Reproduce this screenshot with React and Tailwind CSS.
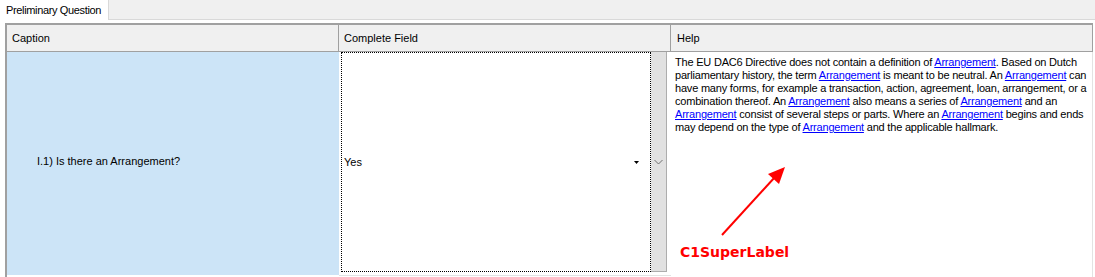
export default function App() {
  const A = ({ children = "Arrangement" }) => (
    <span className="text-[#0000ff] underline">{children}</span>
  );
  return (
    <div
      className="relative w-[1095px] h-[277px] overflow-hidden bg-white text-black text-[11px]"
      style={{ fontFamily: '"Liberation Sans", Arial, sans-serif' }}
    >
      {/* tab strip */}
      <div className="flex h-[20px]">
        <div className="w-[109px] h-[20px] bg-white border-r border-[#d9d9d9] flex items-center pl-[6px] leading-none whitespace-nowrap tracking-[-0.35px]">
          Preliminary Question
        </div>
        <div className="flex-1 h-[20px] bg-[#f0f0f0] border-b border-[#d9d9d9]" />
      </div>
      <div className="h-[3px]" />
      {/* grid */}
      <div className="ml-[5px] w-[1088px] h-[254px] border-l-2 border-t-2 border-[#a0a0a0] flex flex-col">
        <div className="flex h-[27px] bg-[#f0f0f0] border-b border-[#a0a0a0]">
          <div className="w-[332px] border-r border-[#a0a0a0] flex items-center pl-[5px]">Caption</div>
          <div className="w-[332px] border-r border-[#a0a0a0] flex items-center pl-[5px]">Complete Field</div>
          <div className="w-[422px] border-r border-[#a0a0a0] flex items-center pl-[6px]">Help</div>
        </div>
        <div className="flex flex-1">
          <div className="w-[332px] h-[223px] bg-[#cce4f7] flex items-center pl-[30px] pb-[5px]">
            I.1) Is there an Arrangement?
          </div>
          <div className="w-[332px] flex flex-col">
            <div className="flex h-[224px] border-b border-[#e3e3e3]">
              <div className="w-[2px]" />
              <div className="w-[310px] h-[220px] border border-dotted border-black flex items-center pl-[2px] pr-[11px]">
                <span className="flex-1">Yes</span>
                <svg width="5" height="3" viewBox="0 0 5 3" className="block">
                  <polygon points="0,0 5,0 2.5,3" fill="#000" />
                </svg>
              </div>
              <div className="w-[16px] h-[220px] bg-[#e1e1e1] border-r border-b border-[#adadad] flex items-center justify-center">
                <svg width="9" height="6" viewBox="0 0 9 6" className="block">
                  <polyline points="0.5,1 4.5,5 8.5,1" fill="none" stroke="#707070" strokeWidth="1" />
                </svg>
              </div>
            </div>
          </div>
          <div className="w-[422px] h-[225px] border-r border-[#e3e3e3] pl-[4px] pt-[4px] leading-[13px] whitespace-nowrap tracking-[-0.2px]">
            The EU DAC6 Directive does not contain a definition of <A />. Based on Dutch
            <br />
            parliamentary history, the term <A /> is meant to be neutral. An <A /> can
            <br />
            have many forms, for example a transaction, action, agreement, loan, arrangement, or a
            <br />
            combination thereof. An <A /> also means a series of <A /> and an
            <br />
            <A /> consist of several steps or parts. Where an <A /> begins and ends
            <br />
            may depend on the type of <A /> and the applicable hallmark.
          </div>
        </div>
      </div>
      {/* annotation */}
      <svg className="absolute left-0 top-0" width="1095" height="277" viewBox="0 0 1095 277">
        <line x1="722" y1="235" x2="775" y2="177" stroke="#ff0000" strokeWidth="2" />
        <polygon points="785,167 768,174 779,184" fill="#ff0000" />
      </svg>
      <div
        className="absolute left-[680px] top-[245px] text-[14px] font-bold text-[#ff0000] leading-none"
        style={{ fontFamily: '"DejaVu Sans", Verdana, sans-serif' }}
      >
        C1SuperLabel
      </div>
    </div>
  );
}
